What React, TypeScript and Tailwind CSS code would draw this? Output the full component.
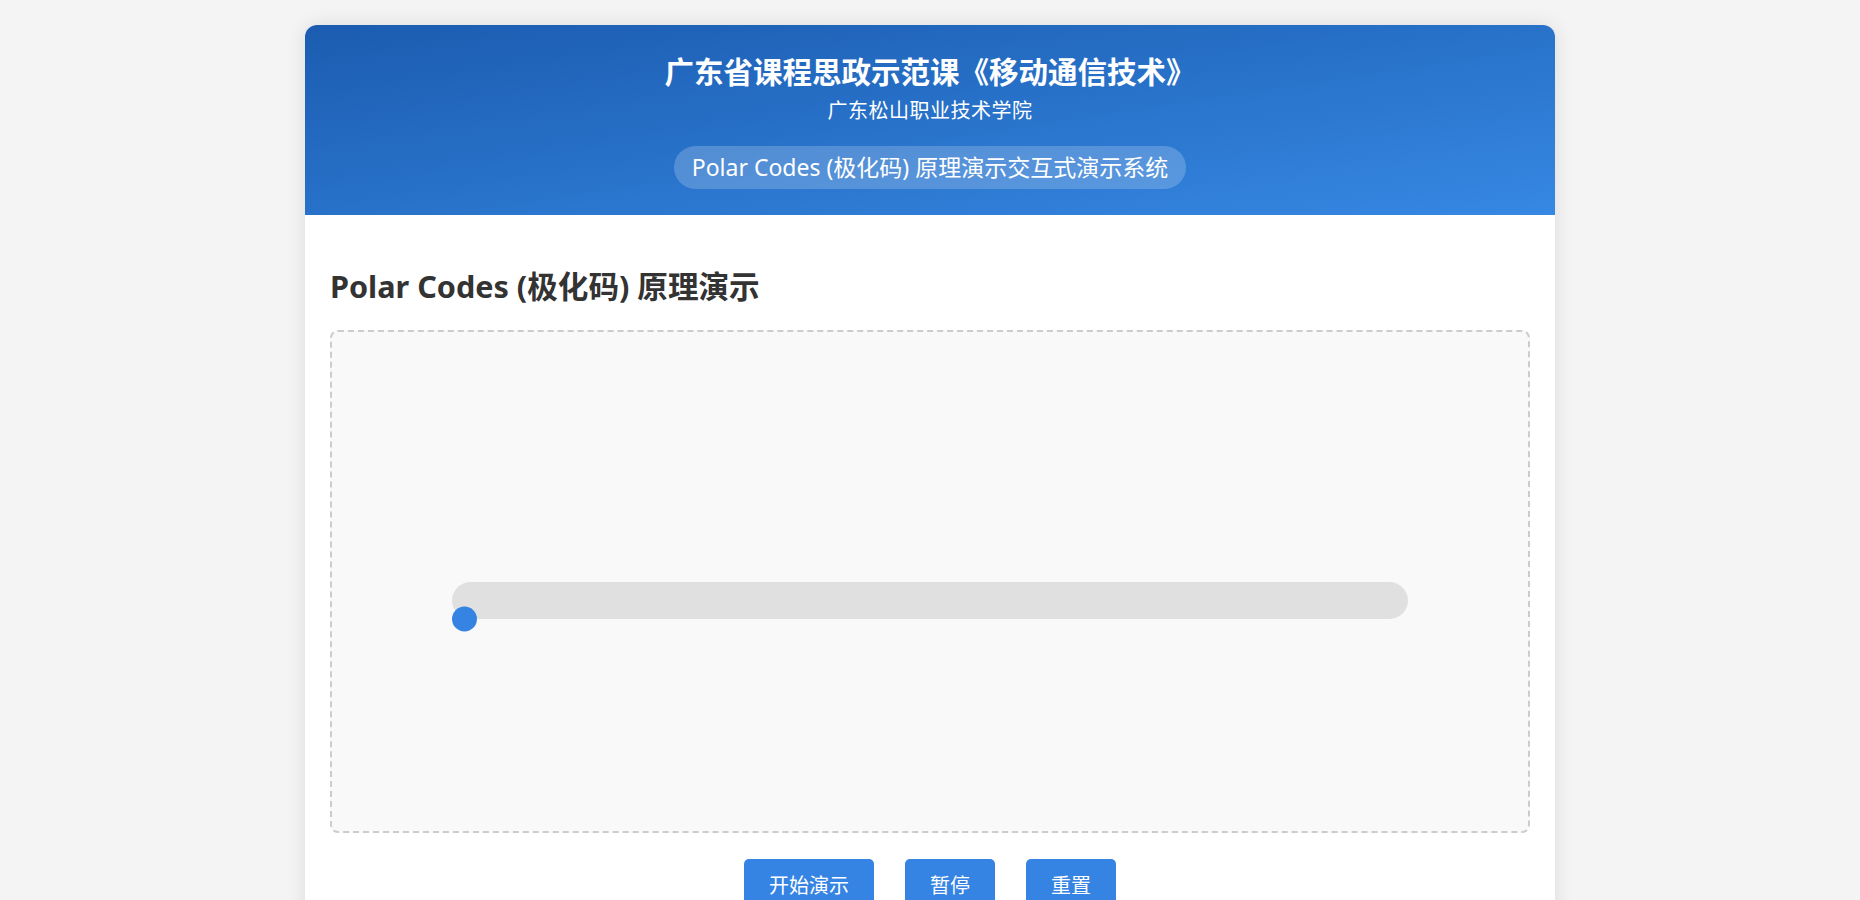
import React from "react";

const steps = [
  { title: "信道极化", text: "将 N 个相同的二进制输入信道通过递归组合与拆分，得到可靠性两极分化的子信道。" },
  { title: "比特选择", text: "挑选可靠性最高的 K 个子信道承载信息比特，其余子信道放置冻结比特（通常为 0）。" },
  { title: "编码", text: "利用生成矩阵 G_N = B_N F^{⊗n} 对输入向量进行线性变换，得到码字。" },
  { title: "译码", text: "采用串行抵消（SC）或串行抵消列表（SCL）译码逐比特恢复信息。" },
];

export default function App() {
  return (
    <div className="min-h-screen bg-[#f4f4f4] pt-[25px] pb-[40px] font-['Noto_Sans','Noto_Sans_CJK_SC',sans-serif]">
      <div className="mx-auto w-[1250px] overflow-hidden rounded-xl bg-white shadow-[0_0_20px_rgba(0,0,0,0.1)]">
        {/* Header */}
        <header className="bg-gradient-to-br from-[#1b5cb0] to-[#3688e3] px-[25px] pt-[25px] pb-[26px] text-center text-white">
          <h1 className="text-[29.5px] font-bold leading-[1.5]">广东省课程思政示范课《移动通信技术》</h1>
          <p className="mt-[2px] text-[20px] leading-[30px] tracking-[0.5px]">广东松山职业技术学院</p>
          <div className="mt-[20px] inline-block rounded-full bg-white/20 px-[18px] py-[5px] text-[23px] leading-[33px]">
            Polar Codes (极化码) 原理演示交互式演示系统
          </div>
        </header>

        <main className="p-[25px]">
          <h2 className="mt-[28px] text-[30.6px] font-bold leading-[36px] text-[#333]">Polar Codes (极化码) 原理演示</h2>

          {/* Demo canvas */}
          <div className="mt-[26px] flex h-[503px] items-center justify-center rounded-lg border-2 border-dashed border-[#ccc] bg-[#f9f9f9] pt-[38px]">
            <div className="relative h-[37px] w-[80%] rounded-full bg-[#e0e0e0]">
              <div className="absolute left-0 top-full h-[25px] w-[25px] -translate-y-1/2 rounded-full bg-[#3584e4]" />
            </div>
          </div>

          {/* Controls */}
          <div className="mt-[26px] flex justify-center gap-[31px]">
            <button className="rounded-[5px] bg-[#3584e4] px-[25px] py-[12px] text-[20px] leading-[30px] text-white">开始演示</button>
            <button className="rounded-[5px] bg-[#3584e4] px-[25px] py-[12px] text-[20px] leading-[30px] text-white">暂停</button>
            <button className="rounded-[5px] bg-[#3584e4] px-[25px] py-[12px] text-[20px] leading-[30px] text-white">重置</button>
          </div>

          {/* Explanation */}
          <section className="mt-[40px] rounded-lg bg-[#f0f6fd] p-[25px] text-[#333]">
            <h3 className="mb-[16px] text-[22px] font-bold">原理说明</h3>
            <div className="grid grid-cols-2 gap-[20px]">
              {steps.map((s, i) => (
                <div key={s.title} className="rounded-lg border border-[#d6e4f5] bg-white p-[20px]">
                  <div className="mb-[8px] flex items-center gap-[10px]">
                    <span className="flex h-[28px] w-[28px] items-center justify-center rounded-full bg-[#3584e4] text-[14px] font-bold text-white">
                      {i + 1}
                    </span>
                    <span className="text-[18px] font-bold">{s.title}</span>
                  </div>
                  <p className="text-[16px] leading-[1.7] text-[#555]">{s.text}</p>
                </div>
              ))}
            </div>
          </section>

          <section className="mt-[30px] mb-[20px] rounded-lg border-l-4 border-[#3584e4] bg-[#fafafa] p-[25px] text-[#333]">
            <h3 className="mb-[10px] text-[22px] font-bold">思政元素</h3>
            <p className="text-[16px] leading-[1.8] text-[#555]">
              极化码由土耳其学者 Erdal Arıkan 于 2008 年提出，是首个被严格证明可达到香农极限的信道编码方案。
              我国科研团队在极化码的工程化与标准化方面做出了重要贡献，极化码被 3GPP 采纳为 5G eMBB 场景控制信道的编码方案，
              体现了自主创新与科技自立自强的精神。
            </p>
          </section>
        </main>
      </div>
    </div>
  );
}
